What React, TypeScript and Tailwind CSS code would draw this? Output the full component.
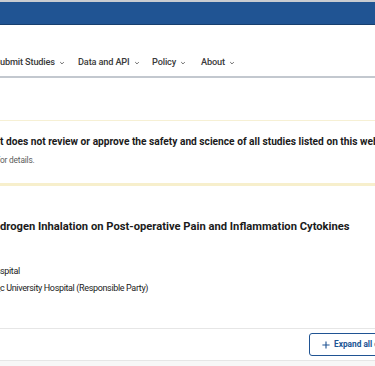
import React from "react";

function Cut({ pre, text, className = "" }: { pre: string; text: string; className?: string }) {
  return (
    <div className={"whitespace-nowrap " + className}>
      <span className="relative">
        <span className="absolute right-full top-0">{pre}</span>
        {text}
      </span>
    </div>
  );
}

function Chevron() {
  return (
    <svg width="6" height="6" viewBox="0 0 10 10" className="ml-[4px] mt-[1px]">
      <path d="M2 3.5 L5 6.5 L8 3.5" fill="none" stroke="#666" strokeWidth="1.6" />
    </svg>
  );
}

export default function App() {
  const nav = [
    { pre: "S", label: "ubmit Studies", w: "w-[78px]" },
    { pre: "", label: "Data and API", w: "w-[74px]" },
    { pre: "", label: "Policy", w: "w-[49px]" },
    { pre: "", label: "About", w: "w-[60px]" },
  ];
  return (
    <div
      className="w-[375px] h-[366px] overflow-hidden bg-white text-[#1b1b1b]"
      style={{ fontFamily: "Roboto, 'Liberation Sans', sans-serif" }}
    >
      <div className="h-[2px] bg-[#c9ccd1]" />
      <div className="h-[23px] bg-[#205493] border-b border-[#173f6e]" />
      <div className="h-[53px] border-b-2 border-[#c3c8cf] flex items-end pb-[8px]">
        <div className="flex items-center text-[9.2px] tracking-[-0.15px] leading-[12px] font-medium text-[#3a3a3a]">
          {nav.map((n, i) => (
            <div key={i} className={"flex items-center shrink-0 " + n.w}>
              {n.pre ? <Cut pre={n.pre} text={n.label} /> : <span>{n.label}</span>}
              <Chevron />
            </div>
          ))}
        </div>
      </div>
      <div className="h-[42px]" />
      <div className="border-t border-[#f6f0d4] border-b-[3px] border-b-[#f7efcc] h-[66px] pt-[14px]">
        <Cut
          pre="Note: The U.S. governmen"
          text="t does not review or approve the safety and science of all studies listed on this website."
          className="text-[10.2px] font-bold leading-[14px] text-[#1b1b1b]"
        />
        <Cut
          pre="Read our full disclaimer f"
          text="or details."
          className="text-[8.4px] tracking-[-0.2px] leading-[10px] text-[#5c5c5c] mt-[6px]"
        />
      </div>
      <div className="h-[32px]" />
      <Cut
        pre="Effect of Hy"
        text="drogen Inhalation on Post-operative Pain and Inflammation Cytokines"
        className="text-[11.2px] font-bold leading-[18px] text-[#1b1b1b]"
      />
      <div className="h-[29px]" />
      <Cut pre="Sponsor: Xuanwu Ho" text="spital" className="text-[9px] tracking-[-0.35px] leading-[12px] text-[#1b1b1b]" />
      <Cut
        pre="Information provided by: Xuanwu Capit"
        text="c University Hospital (Responsible Party)"
        className="text-[9px] tracking-[-0.35px] leading-[12px] text-[#1b1b1b] mt-[5px]"
      />
      <div className="h-[34px]" />
      <div className="border-t border-[#e6e6e6] h-[32px] flex items-center pl-[309px]">
        <button className="h-[23px] shrink-0 pl-[12px] pr-[10px] border border-[#205493] rounded-[3px] flex items-center text-[8.3px] font-bold text-[#205493] whitespace-nowrap">
          <svg width="8" height="8" viewBox="0 0 10 10" className="mr-[4px]">
            <path d="M5 0.5 V9.5 M0.5 5 H9.5" stroke="#205493" strokeWidth="1.4" />
          </svg>
          Expand all content
        </button>
      </div>
      <div className="border-t border-[#e6e6e6] bg-[#f7f7f7] h-[20px]" />
    </div>
  );
}
